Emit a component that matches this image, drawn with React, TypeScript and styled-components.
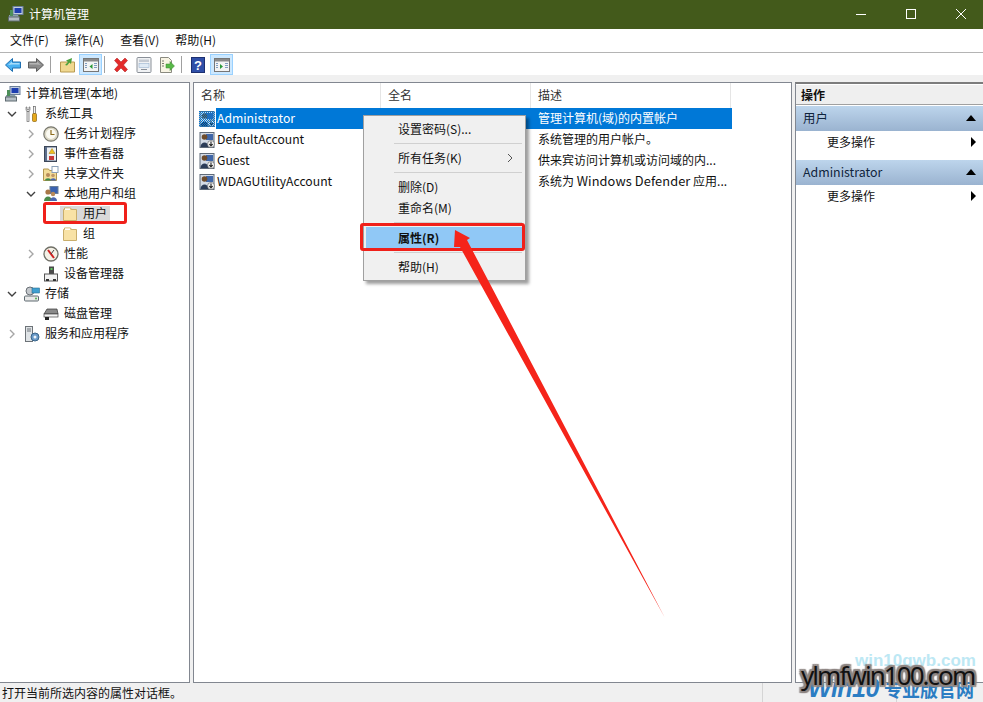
import React from "react";
import styled, { createGlobalStyle } from "styled-components";

const FONT = `"Noto Sans CJK SC", "Noto Sans", sans-serif`;

const GlobalStyle = createGlobalStyle`
	html, body {
		margin: 0;
		padding: 0;
		background: #fff;
	}
	* {
		box-sizing: border-box;
	}
`;

const Page = styled.div`
	position: relative;
	width: 983px;
	height: 702px;
	overflow: hidden;
	display: flex;
	flex-direction: column;
	background: #f0f0f0;
	font-family: ${FONT};
	font-size: 12px;
	color: #111;
`;

const TitleBar = styled.div`
	height: 29px;
	flex: none;
	display: flex;
	align-items: center;
	padding-left: 8px;
	padding-bottom: 2px;
	gap: 5px;
	background: #435a1b;
	color: #fff;
`;

const TitleText = styled.div`
	flex: 1;
`;

const WinButton = styled.div`
	width: 45px;
	height: 27px;
	display: flex;
	align-items: center;
	justify-content: center;
	color: #fff;
`;

const MenuBar = styled.div`
	height: 24px;
	flex: none;
	display: flex;
	align-items: center;
	gap: 16px;
	padding-left: 10px;
	padding-bottom: 2px;
	background: #fff;
	border-bottom: 1px solid #b4b4b4;
`;

const ToolBar = styled.div`
	height: 22px;
	flex: none;
	display: flex;
	align-items: center;
	padding-left: 5px;
	padding-top: 1px;
	background: #fff;
`;

const ToolSlot = styled.div<{ $active?: boolean; $width?: number; $gap?: number }>`
	width: ${(p) => p.$width ?? 16}px;
	height: 21px;
	margin-right: ${(p) => p.$gap ?? 0}px;
	display: flex;
	align-items: center;
	justify-content: center;
	flex: none;
	${(p) => p.$active && "background: #cce8ff; border: 1px solid #99d1ff;"}
`;

const ToolSep = styled.div<{ $gap: number }>`
	width: 1px;
	height: 17px;
	background: #a0a0a0;
	margin-right: ${(p) => p.$gap}px;
	flex: none;
`;

const Main = styled.div`
	flex: 1;
	display: flex;
	gap: 3px;
	padding-top: 7px;
	min-height: 0;
`;

const Panel = styled.div<{ $width: number }>`
	width: ${(p) => p.$width}px;
	flex: none;
	background: #fff;
	border: 1px solid #828790;
`;

const TreePanel = styled(Panel)`
	border-left: none;
	padding-top: 1px;
`;

const ActionsPanel = styled(Panel)`
	border-top: 2px solid #7c7c7c;
	border-right: none;
	padding-top: 1px;
	margin-top: 0;
`;

const TreeRow = styled.div<{ $indent: number }>`
	height: 20px;
	display: flex;
	align-items: center;
	padding-left: ${(p) => p.$indent}px;
	white-space: nowrap;
`;

const Chevron = styled.div`
	width: 14px;
	flex: none;
	display: flex;
	align-items: center;
	justify-content: center;
	margin-right: 5px;
`;

const TreeItem = styled.div<{ $selected?: boolean }>`
	display: flex;
	align-items: center;
	height: 17px;
	${(p) => p.$selected && "background: #d9d9d9; padding: 0 3px 0 2px; margin-left: -2px;"}
`;

const TreeLabel = styled.div`
	margin-left: 5px;
	line-height: 16px;
	padding-bottom: 2px;
`;

const ListHeader = styled.div`
	height: 25px;
	display: flex;
`;

const HeaderCell = styled.div<{ $width: number }>`
	width: ${(p) => p.$width}px;
	flex: none;
	padding-left: 7px;
	line-height: 24px;
	color: #333;
	border-right: 1px solid #e5e5e5;
`;

const ListRow = styled.div`
	height: 21px;
	display: flex;
	width: 538px;
	align-items: center;
	padding-left: 5px;
	white-space: nowrap;
`;

const NameCell = styled.div<{ $selected?: boolean }>`
	width: 316px;
	margin-left: 1px;
	flex: none;
	height: 21px;
	line-height: 21px;
	padding-left: 1px;
	font-size: 12.2px;
	${(p) => p.$selected && "background: #0078d7; color: #fff;"}
`;

const DescCell = styled.div<{ $selected?: boolean }>`
	flex: 1;
	height: 21px;
	line-height: 19px;
	padding-left: 6px;
	${(p) => p.$selected && "background: #0078d7; color: #fff;"}
`;

const DescLatin = styled.span`
	font-size: 12.8px;
	letter-spacing: 0.1px;
`;

const ActionsTitle = styled.div`
	height: 20px;
	margin-bottom: 1px;
	padding-left: 5px;
	line-height: 19px;
	font-weight: 700;
	background: #efefef;
	border-bottom: 1px solid #a0a0a0;
`;

const ActionBand = styled.div`
	height: 25px;
	display: flex;
	align-items: center;
	justify-content: space-between;
	padding: 0 7px 2px;
	background: linear-gradient(#bdd5ec, #9ab3d0);
	color: #10243c;
	font-size: 12.4px;
`;

const ActionItem = styled.div`
	height: 29px;
	display: flex;
	justify-content: space-between;
	padding: 0 7px 8px 31px;
	align-items: center;
`;

const StatusBar = styled.div`
	height: 19px;
	flex: none;
	display: flex;
	align-items: center;
	padding-left: 2px;
	background: #f0f0f0;
`;

const StatusCell = styled.div<{ $width: number }>`
	width: ${(p) => p.$width}px;
	height: 19px;
	line-height: 20px;
	border-right: 1px solid #d5d5d5;
`;

const ContextMenu = styled.div`
	position: absolute;
	left: 363px;
	top: 115px;
	width: 163px;
	height: 166px;
	padding: 2px;
	background: #f0f0f0;
	border: 1px solid #a0a0a0;
	box-shadow: 3px 3px 3px rgba(0, 0, 0, 0.38);
`;

const MenuItem = styled.div<{ $active?: boolean }>`
	height: 21px;
	line-height: 21px;
	padding-left: 32px;
	padding-right: 10px;
	display: flex;
	justify-content: space-between;
	align-items: center;
	${(p) => p.$active && "background: #90c8f6; font-weight: 700; margin: 0 1px 0 0;"}
`;

const MenuSep = styled.div<{ $bottom: number }>`
	height: 1px;
	margin: 4px 1px ${(p) => p.$bottom}px 28px;
	background: #d0d0d0;
`;

const RedBox = styled.div<{ $left: number; $top: number; $width: number; $height: number }>`
	position: absolute;
	left: ${(p) => p.$left}px;
	top: ${(p) => p.$top}px;
	width: ${(p) => p.$width}px;
	height: ${(p) => p.$height}px;
	border: 3px solid #f0201a;
	border-radius: 3px;
`;

const ArrowLayer = styled.svg`
	position: absolute;
	left: 0;
	top: 0;
	pointer-events: none;
`;

const MarkLight = styled.div`
	position: absolute;
	left: 855px;
	top: 651px;
	font: 700 17px "Liberation Sans", sans-serif;
	color: #bde8f4;
`;

const MarkBlue = styled.div`
	position: absolute;
	left: 808px;
	top: 674px;
	display: flex;
	align-items: baseline;
	gap: 5px;
	line-height: 28px;
	white-space: nowrap;
	color: #2b7dc3;
	font-weight: 700;
`;

const MarkBlueLatin = styled.span`
	font: italic 700 25px "Liberation Sans", sans-serif;
	letter-spacing: -0.5px;
`;

const MarkBlueCjk = styled.span`
	font: 700 18px "Noto Sans CJK SC", sans-serif;
`;

const MarkDark = styled.div`
	position: absolute;
	left: 801px;
	top: 659px;
	font: 400 26px "Noto Sans", sans-serif;
	letter-spacing: -1.95px;
	line-height: 32px;
	white-space: nowrap;
	color: #111;
	text-shadow: 2px 0 1px #8d8582, -2px 0 1px #8d8582, 0 2px 1px #8d8582, 0 -2px 1px #8d8582,
		2px 2px 1px #8d8582, -2px -2px 1px #8d8582, 2px -2px 1px #8d8582, -2px 2px 1px #8d8582;
`;

const Svg = styled.svg`
	flex: none;
	display: block;
`;

type IconProps = { children: React.ReactNode; size?: number };

const Icon = ({ children, size = 16 }: IconProps) => (
	<Svg width={size} height={size} viewBox="0 0 16 16">
		{children}
	</Svg>
);

const ChevronRight = () => (
	<Chevron>
		<svg width="8" height="10" viewBox="0 0 8 10">
			<path d="M2 1l4 4-4 4" fill="none" stroke="#a6a6a6" strokeWidth="1.4" />
		</svg>
	</Chevron>
);

const ChevronDown = () => (
	<Chevron>
		<svg width="10" height="8" viewBox="0 0 10 8">
			<path d="M1 2l4 4 4-4" fill="none" stroke="#404040" strokeWidth="1.4" />
		</svg>
	</Chevron>
);

const ComputerIcon = () => (
	<Icon>
		<rect x="5" y="0.500" width="10" height="8" fill="#c4cfe0" stroke="#6b7f99" />
		<rect x="6.500" y="2" width="7" height="5" fill="#1e3fb0" />
		<path d="M1 9h9l1 2H1z" fill="#8aa0a8" />
		<rect x="0.500" y="11" width="11" height="4" fill="#b4bdc4" stroke="#5e6a70" />
		<rect x="2" y="4" width="3" height="6" fill="#4d8f5a" />
	</Icon>
);

const ToolsIcon = () => (
	<Icon>
		<path d="M2 1v3l1 1.500h2L6 4V1L5 1v2.500H3V1z" fill="#d8d8d8" stroke="#666" strokeWidth="0.6" />
		<rect x="3" y="5.500" width="2" height="10" fill="#f2f2f2" stroke="#666" strokeWidth="0.7" />
		<rect x="9.500" y="0.500" width="2" height="7" fill="#f2f2f2" stroke="#666" strokeWidth="0.7" />
		<rect x="8.500" y="7.500" width="4" height="8" rx="1" fill="#e5a81c" stroke="#8a6410" strokeWidth="0.7" />
	</Icon>
);

const ClockIcon = () => (
	<Icon>
		<circle cx="8" cy="8" r="7.200" fill="#dcd8c6" stroke="#77776d" strokeWidth="1.200" />
		<circle cx="8" cy="8" r="5" fill="#fbfaf2" />
		<path d="M8 4v4.500h3.500" fill="none" stroke="#8c6a1a" strokeWidth="1.200" />
	</Icon>
);

const EventIcon = () => (
	<Icon>
		<rect x="1.500" y="0.500" width="12" height="15" fill="#5c6e8c" stroke="#3c4658" />
		<rect x="4" y="1.500" width="9" height="13" fill="#eef0f2" />
		<path d="M9 2.500l3 5H6z" fill="#f0c020" stroke="#a07810" strokeWidth="0.500" />
		<rect x="6" y="10" width="5" height="4" fill="#c83a3a" />
	</Icon>
);

const ShareIcon = () => (
	<Icon>
		<path d="M0.500 3h5l1 1.500h7v10h-13z" fill="#f3dc98" stroke="#b09550" />
		<rect x="9" y="0.500" width="6" height="6" fill="#fff" stroke="#8aa0b8" />
		<circle cx="5" cy="9" r="2" fill="#b88a5a" />
		<path d="M2 14.500c0-3 6-3 6 0z" fill="#3c8a4a" />
		<circle cx="10" cy="9.500" r="1.800" fill="#c09868" />
		<path d="M7.500 14.500c0-3 5.500-3 5.500 0z" fill="#4a66b0" />
	</Icon>
);

const UsersGroupIcon = () => (
	<Icon>
		<rect x="7" y="0.500" width="8" height="7" fill="#3a62b0" stroke="#6b7f99" />
		<circle cx="5" cy="6" r="2.600" fill="#a87848" />
		<path d="M1 15c0-6 8-6 8 0z" fill="#4a8a4a" />
		<circle cx="10" cy="8" r="2.200" fill="#b88a5a" />
		<path d="M7 15c0-5 7-5 7 0z" fill="#4a66b0" />
	</Icon>
);

const FolderIcon = () => (
	<Icon>
		<path d="M1.500 3.500h13v11h-13z" fill="#f8e2a6" stroke="#c9ae6c" />
		<path d="M2.500 3.500v-1.500h6l1 1.500" fill="#fff4cf" stroke="#c9ae6c" />
		<path d="M3 2.500h5v1.500H3z" fill="#fff" />
	</Icon>
);

const PerfIcon = () => (
	<Icon>
		<circle cx="8" cy="8" r="7" fill="#f4f1e6" stroke="#6f6f66" strokeWidth="1.300" />
		<path d="M5 4l6 8" stroke="#d02020" strokeWidth="2" />
		<path d="M11 4L8 8" stroke="#444" strokeWidth="1" />
	</Icon>
);

const DeviceIcon = () => (
	<Icon>
		<rect x="6" y="0.500" width="5" height="8" fill="#4a4a4a" />
		<rect x="7.500" y="2" width="2" height="2" fill="#5ec85e" />
		<rect x="1.500" y="8" width="13" height="7" fill="#f2f2f2" stroke="#555" />
		<rect x="3" y="13" width="3" height="2" fill="#333" />
		<rect x="10" y="13" width="3" height="2" fill="#333" />
	</Icon>
);

const StorageIcon = () => (
	<Icon>
		<circle cx="6" cy="5" r="4" fill="#c4c8cc" stroke="#6a7076" />
		<rect x="8" y="2" width="7.500" height="5" fill="#3f9fd0" stroke="#2a6e90" strokeWidth="0.600" />
		<rect x="0.500" y="10" width="14" height="5" rx="1" fill="#e8e8e8" stroke="#5e6a70" />
		<circle cx="12" cy="12.500" r="1" fill="#50b050" />
	</Icon>
);

const DiskIcon = () => (
	<Icon>
		<path d="M4 3h10l1 5H1z" fill="#8a8a8a" stroke="#333" strokeWidth="0.700" />
		<rect x="1" y="8" width="14" height="3" fill="#f4f4f4" stroke="#444" strokeWidth="0.700" />
		<rect x="2" y="11" width="4" height="3" fill="#222" />
	</Icon>
);

const ServicesIcon = () => (
	<Icon>
		<rect x="1.500" y="0.500" width="7" height="15" fill="#dfe3e6" stroke="#6d7378" />
		<path d="M3 3h4M3 5h4" stroke="#6d7378" />
		<circle cx="11" cy="11" r="4" fill="#6a9ac8" stroke="#3a6488" />
		<circle cx="11" cy="11" r="1.500" fill="#eef4fa" />
	</Icon>
);

const UserListIcon = ({ selected }: { selected?: boolean }) => (
	<Icon>
		<rect x="1" y="0.500" width="14" height="15" fill="#d4dbe6" stroke="#5f6a78" />
		<rect x="7" y="2" width="7" height="6" fill="#3f66a8" />
		<circle cx="5.500" cy="5" r="2.800" fill="#6e4c2c" />
		<path d="M1.500 15c0-6 8-6 8 0z" fill="#2c3c58" />
		<circle cx="12" cy="12" r="3.500" fill="#f4f4f4" stroke="#555" strokeWidth="0.600" />
		<path d="M12 9.500v4M10.300 12l1.700 2 1.700-2" fill="none" stroke="#222" strokeWidth="1.100" />
		{selected && (
			<>
				<defs>
					<pattern id="dither" width="2" height="2" patternUnits="userSpaceOnUse">
						<rect width="1" height="1" fill="#0078d7" />
						<rect x="1" y="1" width="1" height="1" fill="#0078d7" />
					</pattern>
				</defs>
				<rect width="16" height="16" fill="url(#dither)" shapeRendering="crispEdges" />
			</>
		)}
	</Icon>
);

const BackIcon = () => (
	<Icon>
		<path d="M0.500 8L7.500 1.500V5H15.500v6H7.500v3.500z" fill="#49b1f2" stroke="#1f6fb0" strokeLinejoin="round" />
		<path d="M3 8L7 4.500V6h7.500v1.500H7" fill="#a8dcfa" />
	</Icon>
);

const ForwardIcon = () => (
	<Icon>
		<path d="M15.500 8L8.500 1.500V5H0.500v6H8.500v3.500z" fill="#8c8c8c" stroke="#5e5e5e" strokeLinejoin="round" />
		<path d="M13 8L9 4.500V6H1.500v1.500H9" fill="#b5b5b5" />
	</Icon>
);

const UpFolderIcon = () => (
	<Icon>
		<path d="M0.500 5h14v10h-14z" fill="#f0d890" stroke="#b89a50" />
		<path d="M5 8l3-3-2-1.500 6-2.500-1 6-1.500-1.500-2.500 3z" fill="#49a03c" />
	</Icon>
);

const PaneIcon = ({ side }: { side: "left" | "right" }) => (
	<Icon>
		<rect x="0.500" y="1.500" width="15" height="13" fill="#f4f4f4" stroke="#767676" />
		<rect x="1" y="2" width="14" height="2.500" fill="#8a8a8a" />
		{side === "left" ? (
			<>
				<path d="M9.500 7v5L6.500 9.500z" fill="#2b9a3a" />
				<path d="M2 6.500h2M2 8.500h2M2 10.500h2M11 6.500h3M11 8.500h3M11 10.500h3" stroke="#7f9cc0" />
			</>
		) : (
			<>
				<path d="M6 7v5l3-2.500z" fill="#2b9a3a" />
				<path d="M2 6.500h2M2 8.500h2M2 10.500h2M11 6.500h3M11 8.500h3M11 10.500h3" stroke="#7f9cc0" />
			</>
		)}
	</Icon>
);

const DeleteIcon = () => (
	<Icon>
		<path d="M1.500 3.500l2.500-2.500L8 5l4-4 2.500 2.500L10.500 8l4 4.500-2.500 2.500-4-4-4 4-2.500-2.500 4-4.500z" fill="#e42a2a" stroke="#a81818" strokeWidth="0.500" />
	</Icon>
);

const PropsIcon = () => (
	<Icon>
		<rect x="1" y="0.500" width="14" height="15" rx="1" fill="#f0f2f4" stroke="#8a9098" />
		<rect x="3" y="2.500" width="10" height="2.500" fill="#c4cad2" />
		<rect x="3" y="6.500" width="10" height="4" fill="#dfeaf4" stroke="#8aa8c8" strokeWidth="0.500" />
		<path d="M5 12.500h6" stroke="#8a9098" />
	</Icon>
);

const ExportIcon = () => (
	<Icon>
		<path d="M1.500 0.500h8l3 3v12h-11z" fill="#f8f4e4" stroke="#8a8a80" />
		<path d="M3 4h2M3 6.500h2M3 9h2" stroke="#7a7a70" />
		<path d="M7 7h4V4.500L15.500 9 11 13.500V11H7z" fill="#58b848" stroke="#3f8a32" strokeWidth="0.500" />
	</Icon>
);

const HelpIcon = () => (
	<Icon>
		<rect x="0.500" y="0.500" width="13" height="15" fill="#2f4fa8" stroke="#1c2f70" />
		<text x="7" y="13" textAnchor="middle" fontSize="13" fontWeight="700" fill="#fff" fontFamily="Liberation Sans">
			?
		</text>
	</Icon>
);

const CollapseTriangle = () => (
	<svg width="10" height="6" viewBox="0 0 10 6">
		<path d="M5 0l5 6H0z" fill="#000" />
	</svg>
);

const PlayTriangle = () => (
	<svg width="5" height="10" viewBox="0 0 5 10">
		<path d="M0 0l5 5-5 5z" fill="#000" />
	</svg>
);

const treeRows: {
	indent: number;
	chevron?: "right" | "down";
	icon: React.ReactNode;
	label: string;
	selected?: boolean;
}[] = [
	{ indent: 5, icon: <ComputerIcon />, label: "计算机管理(本地)" },
	{ indent: 5, chevron: "down", icon: <ToolsIcon />, label: "系统工具" },
	{ indent: 24, chevron: "right", icon: <ClockIcon />, label: "任务计划程序" },
	{ indent: 24, chevron: "right", icon: <EventIcon />, label: "事件查看器" },
	{ indent: 24, chevron: "right", icon: <ShareIcon />, label: "共享文件夹" },
	{ indent: 24, chevron: "down", icon: <UsersGroupIcon />, label: "本地用户和组" },
	{ indent: 62, icon: <FolderIcon />, label: "用户", selected: true },
	{ indent: 62, icon: <FolderIcon />, label: "组" },
	{ indent: 24, chevron: "right", icon: <PerfIcon />, label: "性能" },
	{ indent: 43, icon: <DeviceIcon />, label: "设备管理器" },
	{ indent: 5, chevron: "down", icon: <StorageIcon />, label: "存储" },
	{ indent: 43, icon: <DiskIcon />, label: "磁盘管理" },
	{ indent: 5, chevron: "right", icon: <ServicesIcon />, label: "服务和应用程序" },
];

const users: { name: string; desc: React.ReactNode; selected?: boolean }[] = [
	{ name: "Administrator", desc: "管理计算机(域)的内置帐户", selected: true },
	{ name: "DefaultAccount", desc: "系统管理的用户帐户。" },
	{ name: "Guest", desc: "供来宾访问计算机或访问域的内..." },
	{
		name: "WDAGUtilityAccount",
		desc: (
			<>
				系统为 <DescLatin>Windows Defender</DescLatin> 应用...
			</>
		),
	},
];

export default function App() {
	return (
		<Page>
			<GlobalStyle />
			<TitleBar>
				<ComputerIcon />
				<TitleText>计算机管理</TitleText>
				<WinButton>
					<svg width="10" height="10" viewBox="0 0 10 10">
						<path d="M0 5.500h10" stroke="#fff" />
					</svg>
				</WinButton>
				<WinButton>
					<svg width="10" height="10" viewBox="0 0 10 10">
						<rect x="0.500" y="0.500" width="9" height="9" fill="none" stroke="#fff" />
					</svg>
				</WinButton>
				<WinButton>
					<svg width="10" height="10" viewBox="0 0 10 10">
						<path d="M0 0l10 10M10 0L0 10" stroke="#fff" />
					</svg>
				</WinButton>
			</TitleBar>
			<MenuBar>
				<span>文件(F)</span>
				<span>操作(A)</span>
				<span>查看(V)</span>
				<span>帮助(H)</span>
			</MenuBar>
			<ToolBar>
				<ToolSlot $gap={7}><BackIcon /></ToolSlot>
				<ToolSlot $gap={6}><ForwardIcon /></ToolSlot>
				<ToolSep $gap={9} />
				<ToolSlot $gap={3}><UpFolderIcon /></ToolSlot>
				<ToolSlot $active $width={23} $gap={2}><PaneIcon side="left" /></ToolSlot>
				<ToolSep $gap={8} />
				<ToolSlot $gap={7}><DeleteIcon /></ToolSlot>
				<ToolSlot $gap={7}><PropsIcon /></ToolSlot>
				<ToolSlot $gap={6}><ExportIcon /></ToolSlot>
				<ToolSep $gap={9} />
				<ToolSlot $gap={3}><HelpIcon /></ToolSlot>
				<ToolSlot $active $width={23}><PaneIcon side="right" /></ToolSlot>
			</ToolBar>
			<Main>
				<TreePanel $width={190}>
					{treeRows.map((row) => (
						<TreeRow key={row.label} $indent={row.indent}>
							{row.chevron === "right" && <ChevronRight />}
							{row.chevron === "down" && <ChevronDown />}
							<TreeItem $selected={row.selected}>
								{row.icon}
								<TreeLabel>{row.label}</TreeLabel>
							</TreeItem>
						</TreeRow>
					))}
				</TreePanel>
				<Panel $width={599}>
					<ListHeader>
						<HeaderCell $width={187}>名称</HeaderCell>
						<HeaderCell $width={150}>全名</HeaderCell>
						<HeaderCell $width={200}>描述</HeaderCell>
					</ListHeader>
					{users.map((user) => (
						<ListRow key={user.name}>
							<UserListIcon selected={user.selected} />
							<NameCell $selected={user.selected}>{user.name}</NameCell>
							<DescCell $selected={user.selected}>{user.desc}</DescCell>
						</ListRow>
					))}
				</Panel>
				<ActionsPanel $width={188}>
					<ActionsTitle>操作</ActionsTitle>
					<ActionBand>
						<span>用户</span>
						<CollapseTriangle />
					</ActionBand>
					<ActionItem>
						<span>更多操作</span>
						<PlayTriangle />
					</ActionItem>
					<ActionBand>
						<span>Administrator</span>
						<CollapseTriangle />
					</ActionBand>
					<ActionItem>
						<span>更多操作</span>
						<PlayTriangle />
					</ActionItem>
				</ActionsPanel>
			</Main>
			<StatusBar>
				<StatusCell $width={761}>打开当前所选内容的属性对话框。</StatusCell>
				<StatusCell $width={134} />
			</StatusBar>

			<ContextMenu>
				<MenuItem>设置密码(S)...</MenuItem>
				<MenuSep $bottom={3} />
				<MenuItem>
					所有任务(K)
					<svg width="6" height="10" viewBox="0 0 6 10">
						<path d="M1 1l4 4-4 4" fill="none" stroke="#555" />
					</svg>
				</MenuItem>
				<MenuSep $bottom={3} />
				<MenuItem>删除(D)</MenuItem>
				<MenuItem>重命名(M)</MenuItem>
				<MenuSep $bottom={4} />
				<MenuItem $active>属性(R)</MenuItem>
				<MenuSep $bottom={3} />
				<MenuItem>帮助(H)</MenuItem>
			</ContextMenu>
			<RedBox $left={43} $top={202} $width={84} $height={22} />
			<RedBox $left={360} $top={223} $width={165} $height={28} />
			<ArrowLayer width="983" height="702" viewBox="0 0 983 702">
				<path d="M455 230L470 238L467 240L665 618L460 247L454 247z" fill="#f5241a" />
			</ArrowLayer>
			<MarkLight>win10gwb.com</MarkLight>
			<MarkBlue>
				<MarkBlueLatin>Win10</MarkBlueLatin>
				<MarkBlueCjk>专业版官网</MarkBlueCjk>
			</MarkBlue>
			<MarkDark>ylmfwin100.com</MarkDark>
		</Page>
	);
}
